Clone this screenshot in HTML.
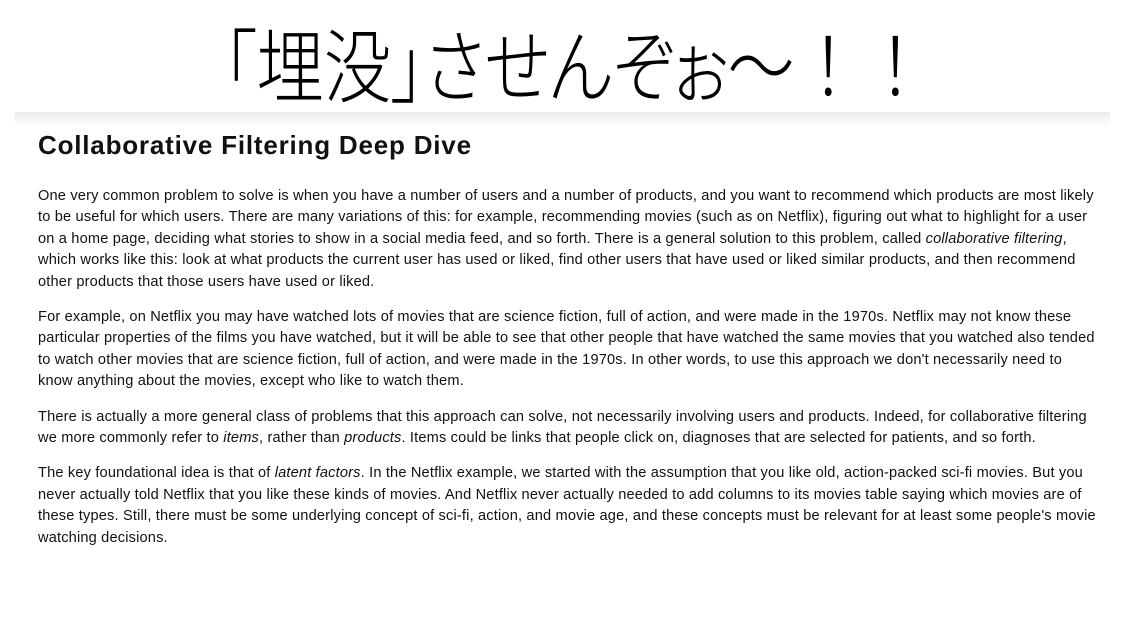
<!DOCTYPE html>
<html><head><meta charset="utf-8"><style>
html,body{margin:0;padding:0;background:#fff;width:1132px;height:620px;overflow:hidden}
.top{position:absolute;left:0;top:0;width:1132px;height:113px;text-align:center}
.top span.t{position:absolute;left:576px;top:10px;transform:translateX(-50%) scaleX(0.84);white-space:nowrap;font-family:"Noto Sans CJK JP","IPAGothic",sans-serif;font-size:80px;line-height:104px;color:#000;font-feature-settings:"palt";font-weight:300}
.top span.n{font-feature-settings:normal}
.band{position:absolute;left:15px;top:112px;width:1095px;height:14px;background:linear-gradient(#ebebeb,#fff)}
.c{position:absolute;left:38px;top:126px;width:1058px;font-family:"Liberation Sans",sans-serif;color:#111}
h1{font-size:26px;font-weight:bold;margin:2px 0 0 0;line-height:34px;letter-spacing:0.8px}
p{font-size:14.6px;line-height:21.4px;margin:0 0 14px 0;letter-spacing:0.17px}
p.first{margin-top:24px}
</style></head><body>
<div class="top"><span class="t">「埋没」させんぞぉ〜<span class="n">！！</span></span></div>
<div class="band"></div>
<div class="c">
<h1>Collaborative Filtering Deep Dive</h1>
<p class="first">One very common problem to solve is when you have a number of users and a number of products, and you want to recommend which products are most likely to be useful for which users. There are many variations of this: for example, recommending movies (such as on Netflix), figuring out what to highlight for a user on a home page, deciding what stories to show in a social media feed, and so forth. There is a general solution to this problem, called <i>collaborative filtering</i>, which works like this: look at what products the current user has used or liked, find other users that have used or liked similar products, and then recommend other products that those users have used or liked.</p>
<p>For example, on Netflix you may have watched lots of movies that are science fiction, full of action, and were made in the 1970s. Netflix may not know these particular properties of the films you have watched, but it will be able to see that other people that have watched the same movies that you watched also tended to watch other movies that are science fiction, full of action, and were made in the 1970s. In other words, to use this approach we don't necessarily need to know anything about the movies, except who like to watch them.</p>
<p>There is actually a more general class of problems that this approach can solve, not necessarily involving users and products. Indeed, for collaborative filtering we more commonly refer to <i>items</i>, rather than <i>products</i>. Items could be links that people click on, diagnoses that are selected for patients, and so forth.</p>
<p>The key foundational idea is that of <i>latent factors</i>. In the Netflix example, we started with the assumption that you like old, action-packed sci-fi movies. But you never actually told Netflix that you like these kinds of movies. And Netflix never actually needed to add columns to its movies table saying which movies are of these types. Still, there must be some underlying concept of sci-fi, action, and movie age, and these concepts must be relevant for at least some people's movie watching decisions.</p>
</div>
</body></html>
